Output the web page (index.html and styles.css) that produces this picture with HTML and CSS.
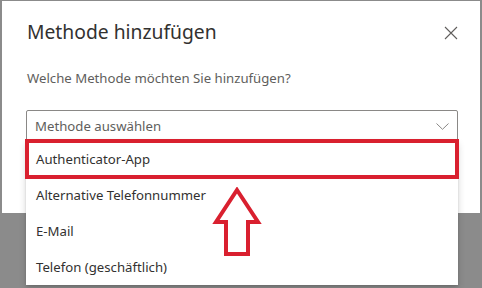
FILE: index.html
```html
<!DOCTYPE html>
<html lang="de">
<head>
<meta charset="utf-8">
<link rel="stylesheet" href="styles.css">
</head>
<body>
<div class="dialog">
  <div class="header">
    <h1 class="title">Methode hinzufügen</h1>
    <svg class="close" width="14" height="14" viewBox="0 0 14 14"><path d="M1 1L13 13M13 1L1 13" stroke="#605e5c" stroke-width="1.1" fill="none"/></svg>
  </div>
  <p class="question">Welche Methode möchten Sie hinzufügen?</p>
  <div class="select-wrap">
    <div class="select">
      <span class="placeholder">Methode auswählen</span>
      <svg class="chev" width="13" height="7" viewBox="0 0 13 7"><path d="M0.5 0.5L6.5 6.3L12.5 0.5" stroke="#8a8886" stroke-width="1" fill="none"/></svg>
    </div>
    <ul class="menu">
      <li class="opt">Authenticator-App</li>
      <li class="opt">Alternative Telefonnummer</li>
      <li class="opt">E-Mail</li>
      <li class="opt">Telefon (geschäftlich)</li>
    </ul>
    <div class="highlight"></div>
    <svg class="arrow" width="50" height="70" viewBox="0 0 50 70"><path d="M25 3L46 35H36V67H14V35H4Z" stroke="#d9202f" stroke-width="4" fill="none" stroke-linejoin="miter"/></svg>
  </div>
</div>
</body>
</html>
```
FILE: styles.css
```css
html, body {
  margin: 0;
  padding: 0;
}
body {
  width: 482px;
  height: 288px;
  overflow: hidden;
  background: #8b8b8b;
  font-family: "Noto Sans", "Open Sans", sans-serif;
}
.dialog {
  position: relative;
  box-sizing: border-box;
  margin: 1px 2px 0 2px;
  width: 478px;
  height: 212px;
  background: #fff;
  padding: 0 22px 0 25px;
}
.header {
  display: flex;
  justify-content: space-between;
  align-items: center;
  padding-top: 17px;
  height: 28px;
}
.title {
  margin: 0;
  font-size: 19.3px;
  font-weight: 400;
  line-height: 28px;
  color: #323130;
}
.close {
  display: block;
  margin-top: 1px;
}
.question {
  margin: 22px 0 0 0;
  font-size: 13.2px;
  line-height: 20px;
  color: #605e5c;
}
.select-wrap {
  position: relative;
  margin-top: 22px;
  margin-left: -1px;
}
.select {
  box-sizing: border-box;
  width: 432px;
  height: 32px;
  border: 1px solid #8a8886;
  border-radius: 2px;
  display: flex;
  align-items: center;
  justify-content: space-between;
  padding: 0 8px 0 8px;
}
.placeholder {
  font-size: 13.2px;
  color: #605e5c;
  line-height: 20px;
}
.chev {
  display: block;
}
.menu {
  position: absolute;
  left: 0;
  top: 31px;
  width: 432px;
  margin: 0;
  padding: 0;
  list-style: none;
  background: #fff;
  box-shadow: 0 3px 7px rgba(0,0,0,0.18), 0 1px 2px rgba(0,0,0,0.1);
}
.opt {
  height: 36px;
  line-height: 36px;
  padding-left: 10px;
  font-size: 13.2px;
  color: #323130;
}
.highlight {
  position: absolute;
  left: -1px;
  top: 29px;
  width: 434px;
  height: 40px;
  box-sizing: border-box;
  border: 4px solid #d9202f;
}
.arrow {
  position: absolute;
  left: 186px;
  top: 77px;
}
```
